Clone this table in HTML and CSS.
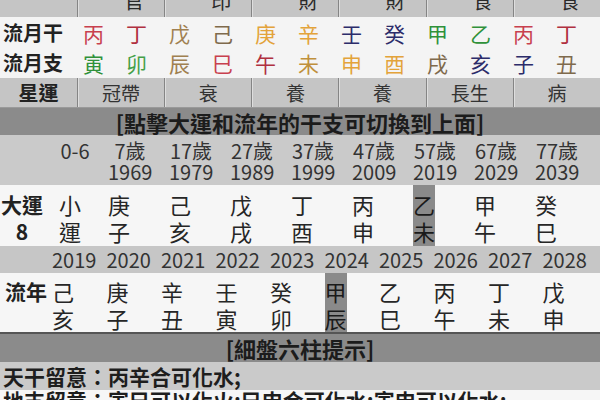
FILE: index.html
```html
<!DOCTYPE html>
<html lang="zh-Hant">
<head>
<meta charset="utf-8">
<link rel="stylesheet" href="styles.css">
</head>
<body>
<div class="page">
  <div class="six hdr">
    <div class="cell"></div>
    <div class="cell"><div class="hc">官</div></div>
    <div class="cell"><div class="hc">印</div></div>
    <div class="cell"><div class="hc">財</div></div>
    <div class="cell"><div class="hc">財</div></div>
    <div class="cell"><div class="hc">食</div></div>
    <div class="cell"><div class="hc">食</div></div>
  </div>

  <div class="liuyue">
    <div class="lbl">流月干</div>
    <div class="fire">丙</div><div class="fire2">丁</div><div class="earth">戊</div><div class="earth2">己</div>
    <div class="metal">庚</div><div class="metal">辛</div><div class="water">壬</div><div class="water">癸</div>
    <div class="wood">甲</div><div class="wood">乙</div><div class="fire">丙</div><div class="fire2">丁</div>
    <div class="lbl">流月支</div>
    <div class="wood">寅</div><div class="wood2">卯</div><div class="earth">辰</div><div class="fire">巳</div>
    <div class="fire2">午</div><div class="earth3">未</div><div class="metal">申</div><div class="metal">酉</div>
    <div class="earth2">戌</div><div class="water">亥</div><div class="water">子</div><div class="earth2">丑</div>
  </div>

  <div class="six xy">
    <div class="cell lbl">星運</div>
    <div class="cell">冠帶</div>
    <div class="cell">衰</div>
    <div class="cell">養</div>
    <div class="cell">養</div>
    <div class="cell">長生</div>
    <div class="cell">病</div>
  </div>

  <div class="band">[點擊大運和流年的干支可切換到上面]</div>

  <div class="dy dy-head">
    <div></div>
    <div class="first"><div class="ag">0-6</div></div>
    <div><div class="ag">7歲<br>1969</div></div>
    <div><div class="ag">17歲<br>1979</div></div>
    <div><div class="ag">27歲<br>1989</div></div>
    <div><div class="ag">37歲<br>1999</div></div>
    <div><div class="ag">47歲<br>2009</div></div>
    <div><div class="ag">57歲<br>2019</div></div>
    <div><div class="ag">67歲<br>2029</div></div>
    <div><div class="ag">77歲<br>2039</div></div>
  </div>

  <div class="dy dy-row">
    <div class="lbl">大運<br>8</div>
    <div class="first"><div class="gz">小<br>運</div></div>
    <div><div class="gz">庚<br>子</div></div>
    <div><div class="gz">己<br>亥</div></div>
    <div><div class="gz">戊<br>戌</div></div>
    <div><div class="gz">丁<br>酉</div></div>
    <div><div class="gz">丙<br>申</div></div>
    <div><div class="gz on">乙<br>未</div></div>
    <div><div class="gz">甲<br>午</div></div>
    <div><div class="gz">癸<br>巳</div></div>
  </div>

  <div class="ln ln-head">
    <div></div>
    <div>2019</div><div>2020</div><div>2021</div><div>2022</div><div>2023</div>
    <div>2024</div><div>2025</div><div>2026</div><div>2027</div><div>2028</div>
  </div>

  <div class="ln ln-row">
    <div class="lbl">流年</div>
    <div><div class="gz">己<br>亥</div></div>
    <div><div class="gz">庚<br>子</div></div>
    <div><div class="gz">辛<br>丑</div></div>
    <div><div class="gz">壬<br>寅</div></div>
    <div><div class="gz">癸<br>卯</div></div>
    <div><div class="gz on">甲<br>辰</div></div>
    <div><div class="gz">乙<br>巳</div></div>
    <div><div class="gz">丙<br>午</div></div>
    <div><div class="gz">丁<br>未</div></div>
    <div><div class="gz">戊<br>申</div></div>
  </div>

  <div class="band band2">[細盤六柱提示]</div>
  <div class="tip tip-gray">天干留意：丙辛合可化水;</div>
  <div class="tip tip-white">地支留意：寅巳可以化火;巳申合可化水;寅申可以化水;</div>
</div>
</body>
</html>
```

FILE: styles.css
```css
* { box-sizing: border-box; }
html, body { margin: 0; padding: 0; background: #f6f6f6; }
.page {
  width: 600px;
  height: 400px;
  overflow: hidden;
  font-family: "Noto Sans CJK TC", "Noto Sans CJK SC", "Noto Sans", sans-serif;
  color: #2a2a2a;
  background: #f6f6f6;
}
.lbl { font-weight: bold; color: #222; }

/* six-cell rows */
.six {
  display: grid;
  grid-template-columns: 77px repeat(6, 1fr);
  background: #c5c5c5;
}
.six .cell + .cell {
  border-left: 1px solid #858585;
  box-shadow: inset 1px 0 0 #dedede;
}
.hdr { height: 17px; grid-template-rows: 17px; overflow: hidden; }
.hc {
  font-size: 20px;
  line-height: 20px;
  margin-top: -9px;
  text-align: center;
  padding-left: 26px;
  color: #2a2a2a;
}
.xy {
  height: 30px;
  border-bottom: 1px solid #9a9a9a;
  font-size: 19px;
  line-height: 29px;
  text-align: center;
  color: #333;
}
.xy .lbl { font-size: 20px; color: #222; }

/* liu yue */
.liuyue {
  display: grid;
  grid-template-columns: 72px repeat(12, 43px);
  grid-auto-rows: 30px;
  padding-top: 1px;
  height: 61px;
  background: #f4f4f4;
  font-size: 21px;
  line-height: 30px;
  text-align: center;
}
.liuyue .lbl { font-size: 20px; text-align: left; padding-left: 3px; }
.fire { color: #c8404e; }
.fire2 { color: #b03040; }
.earth { color: #a08050; }
.earth2 { color: #7f6a4c; }
.earth3 { color: #c0903c; }
.metal { color: #e3a33a; }
.water { color: #2c2c6a; }
.wood { color: #2f913a; }
.wood2 { color: #44a048; }

/* dark bands */
.band {
  height: 27px;
  background: #8b8b8b;
  font-size: 22px;
  font-weight: bold;
  line-height: 29px;
  text-align: center;
  color: #1c1c1c;
}
.band2 { height: 30px; border-top: 2px solid #555; line-height: 29px; }

/* da yun */
.dy {
  display: grid;
  grid-template-columns: 44px 64px repeat(8, 61px);
}
.dy .first { padding-left: 15px; }
.dy-head {
  height: 50px;
  background: #cacaca;
  font-size: 20px;
  line-height: 21px;
  padding-top: 5px;
  color: #333;
}
.ag { width: 44px; text-align: center; }
.dy .first .ag { width: 32px; }
.dy-row {
  height: 61px;
  background: #f6f6f6;
  font-size: 22px;
  line-height: 27px;
}
.dy-row .lbl, .ln-row .lbl {
  font-size: 21px;
  text-align: center;
  padding-top: 6px;
}
.gz {
  width: 22px;
  height: 100%;
  padding-top: 6px;
  color: #262626;
}
.gz.on { background: #8a8a8a; color: #1a1a1a; }

/* liu nian */
.ln {
  display: grid;
  grid-template-columns: 52px repeat(10, 54.5px);
}
.ln-head {
  height: 27px;
  background: #c6c6c6;
  font-size: 20px;
  line-height: 27px;
  color: #333;
}
.ln-row {
  height: 59px;
  background: #f6f6f6;
  font-size: 22px;
  line-height: 27px;
}
.ln-row .gz { padding-top: 5px; }
.ln-row .lbl { padding-top: 5px; }

/* tips */
.tip {
  font-size: 21px;
  font-weight: bold;
  color: #1e1e1e;
  padding-left: 3px;
  white-space: nowrap;
}
.tip-gray { height: 28px; line-height: 28px; background: #cacaca; }
.tip-white { height: 20px; line-height: 20px; background: #f6f6f6; }
```
